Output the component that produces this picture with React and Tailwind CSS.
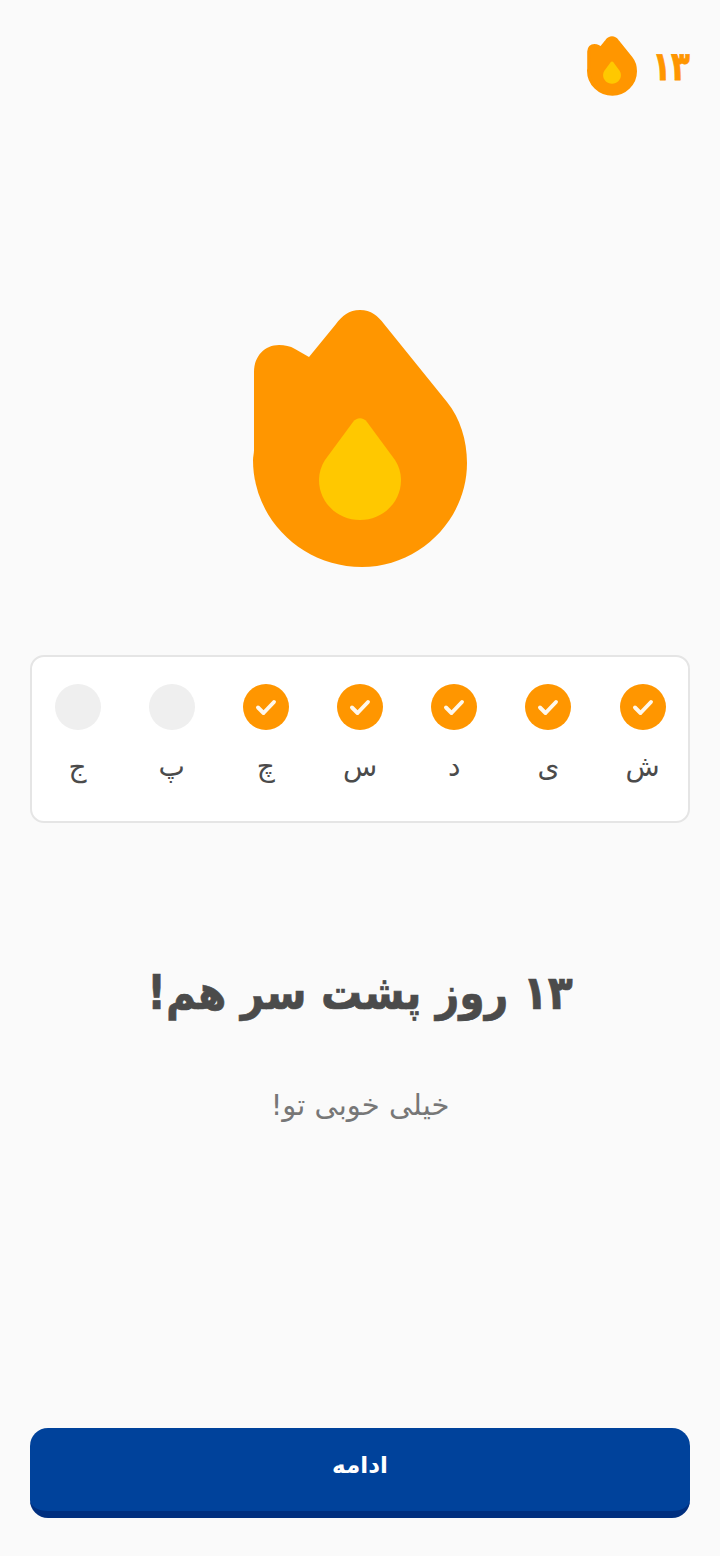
const FLAME_OUTER =
  "M107 0C118 0 125 6 131 14L194 92C207 108 214 130 214 153C214 210 166 257 109 257C50 257 0 210 0 150C0 147 1 143 1 140L1 62C1 46 12 35 26 35C32 35 37 36 42 39L56 47L83 14C89 6 96 0 107 0Z";
const FLAME_INNER =
  "M100 112C104 107 110 107 114 112L142 150C146 156 148 163 148 170C148 192 130 210 107 210C84 210 66 192 66 170C66 163 68 156 72 150Z";

const days = [
  { label: "ش", done: true },
  { label: "ی", done: true },
  { label: "د", done: true },
  { label: "س", done: true },
  { label: "چ", done: true },
  { label: "پ", done: false },
  { label: "ج", done: false }
];

function Flame({ className, fat }) {
  return (
    <svg viewBox={fat ? "-8 -8 230 273" : "0 0 214 257"} className={className}>
      <path
        d={FLAME_OUTER}
        fill="#ff9600"
        stroke={fat ? "#ff9600" : "none"}
        strokeWidth={fat ? 16 : 0}
        strokeLinejoin="round"
      />
      <path d={FLAME_INNER} fill="#ffc800" />
    </svg>
  );
}

function DayItem({ label, done }) {
  return (
    <div className="flex w-[46px] flex-col items-center">
      {done ? (
        <div className="flex h-[46px] w-[46px] items-center justify-center rounded-full bg-[#ff9600]">
          <svg viewBox="0 0 24 24" className="h-[24px] w-[24px]" fill="none">
            <path d="M4 12.5L9.5 18L20 7" stroke="#fff8ec" strokeWidth="3.9" strokeLinecap="round" strokeLinejoin="round" />
          </svg>
        </div>
      ) : (
        <div className="h-[46px] w-[46px] rounded-full bg-[#efefef]" />
      )}
      <span className="mt-[17px] h-[40px] text-[28px] leading-[40px] text-[#4b4b4b]">{label}</span>
    </div>
  );
}

export default function App() {
  return (
    <div
      dir="rtl"
      className="flex h-[1556px] w-full flex-col bg-[#fafafa] px-[30px] font-['DejaVu_Sans',sans-serif]"
    >
      {/* Header */}
      <div className="mt-[36px] flex h-[60px] items-center gap-[15px]">
        <span className="scale-y-[1.3] text-[31px] leading-none font-bold text-[#ff9600] [-webkit-text-stroke:0.6px_#ff9600]">۱۳</span>
        <Flame fat className="h-[60px] w-[50px]" />
      </div>

      <Flame className="mx-auto mt-[214px] h-[257px] w-[214px]" />

      {/* Week */}
      <div className="mt-[88px] flex h-[168px] justify-between rounded-[14px] border-2 border-[#e5e5e5] bg-white px-[22.5px] pt-[27px]">
        {days.map((day) => (
          <DayItem key={day.label} label={day.label} done={day.done} />
        ))}
      </div>

      <h1 className="mt-[140px] scale-y-[1.15] text-center text-[41px] leading-[60px] font-bold text-[#4b4b4b] [-webkit-text-stroke:0.6px_#4b4b4b]">۱۳ روز پشت سر هم!</h1>
      <p className="mt-[62px] text-center text-[29px] leading-[40px] text-[#777777]">خیلی خوبی تو!</p>

      <button className="mt-auto mb-[38px] h-[90px] w-full rounded-[18px] border-b-[7px] border-[#002f7f] bg-[#00429b] pb-[8px] text-[23px] font-bold text-white">
        ادامه
      </button>
    </div>
  );
}
